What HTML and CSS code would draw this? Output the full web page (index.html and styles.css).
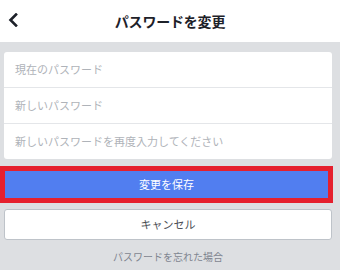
FILE: index.html
```html
<!DOCTYPE html>
<html lang="ja">
<head>
<meta charset="utf-8">
<link rel="stylesheet" href="styles.css">
</head>
<body>
<header class="header">
  <span class="back">
    <svg width="10" height="14" viewBox="0 0 10 14"><path d="M8 1.5 L2.5 7 L8 12.5" fill="none" stroke="#1d2129" stroke-width="2.6" stroke-linecap="square"/></svg>
  </span>
  <h1 class="title">パスワードを変更</h1>
</header>
<main class="main">
  <div class="card">
    <div class="row">現在のパスワード</div>
    <div class="row">新しいパスワード</div>
    <div class="row">新しいパスワードを再度入力してください</div>
  </div>
  <div class="save">変更を保存</div>
  <div class="cancel">キャンセル</div>
  <div class="forgot">パスワードを忘れた場合</div>
</main>
</body>
</html>
```
FILE: styles.css
```css
html, body {
  margin: 0;
  padding: 0;
  background: #dddfe2;
  font-family: "Noto Sans CJK JP", "Noto Sans", sans-serif;
  width: 340px;
  height: 270px;
  overflow: hidden;
}
.header {
  height: 42px;
  background: #fff;
  display: flex;
  align-items: center;
  justify-content: center;
  position: relative;
}
.back {
  position: absolute;
  left: 8px;
  top: 13px;
  width: 10px;
  height: 14px;
  display: flex;
}
.title {
  margin: 0;
  font-size: 14px;
  font-weight: 700;
  color: #1d2129;
  letter-spacing: -0.2px;
}
.main {
  padding: 10px 8px 0 4px;
  display: flex;
  flex-direction: column;
}
.card {
  background: #fff;
  border-radius: 3px;
  display: flex;
  flex-direction: column;
}
.row {
  height: 35px;
  line-height: 35px;
  padding-left: 11px;
  font-size: 11px;
  color: #afb3b9;
  border-top: 1px solid #e4e6e9;
}
.row:first-child {
  border-top: none;
  height: 35px;
}
.save {
  margin: 12px 4px 0 1px;
  height: 27px;
  line-height: 27px;
  background: #517ef0;
  color: #fff;
  text-align: center;
  font-size: 11px;
  outline: 5px solid #e5202e;
}
.cancel {
  margin-top: 11px;
  height: 29px;
  line-height: 29px;
  background: #fff;
  border: 1px solid #bec3c9;
  border-radius: 3px;
  text-align: center;
  font-size: 11px;
  color: #4b4f56;
}
.forgot {
  margin-top: 10px;
  text-align: center;
  font-size: 10px;
  color: #7f8590;
  line-height: 14px;
}
```
